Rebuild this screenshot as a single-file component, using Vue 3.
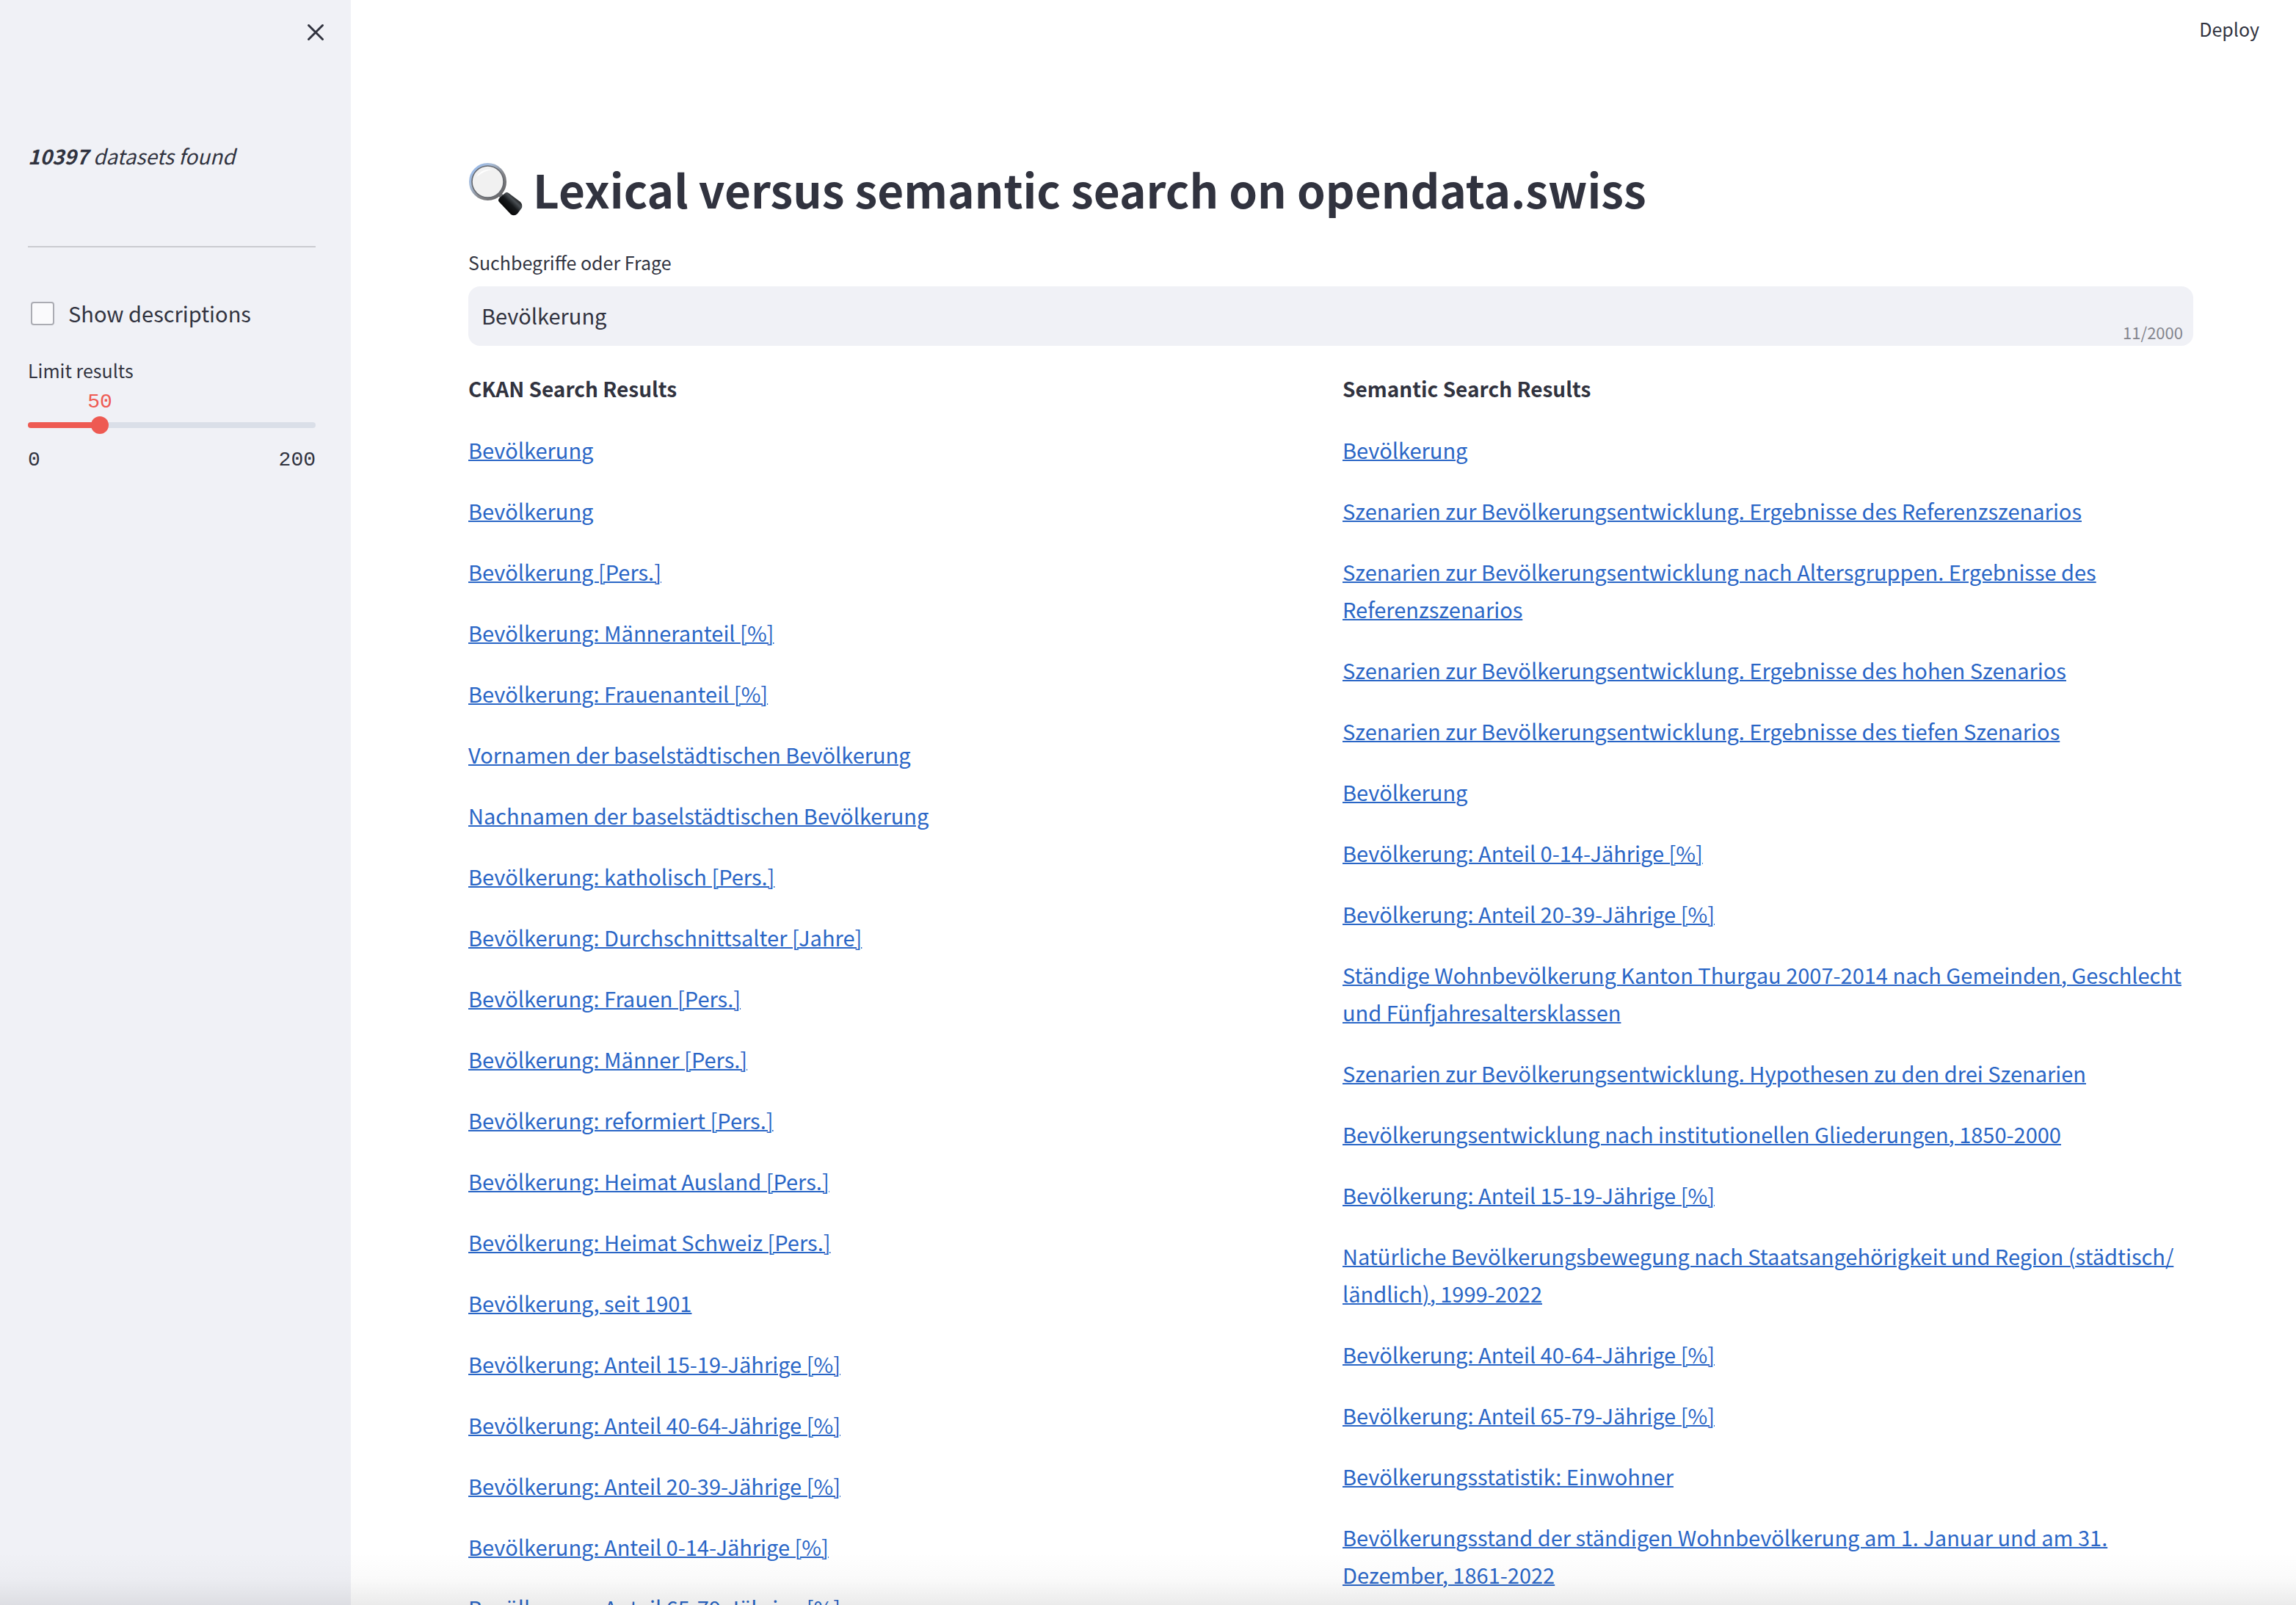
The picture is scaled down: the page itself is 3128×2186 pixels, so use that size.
<script setup>
import { ref, computed } from 'vue'

const query = ref('Bevölkerung')
const showDescriptions = ref(false)
const limit = ref(50)
const maxLimit = 200
const filled = computed(() => (limit.value / maxLimit) * 100 + '%')

const ckanResults = [
  'Bevölkerung',
  'Bevölkerung',
  'Bevölkerung [Pers.]',
  'Bevölkerung: Männeranteil [%]',
  'Bevölkerung: Frauenanteil [%]',
  'Vornamen der baselstädtischen Bevölkerung',
  'Nachnamen der baselstädtischen Bevölkerung',
  'Bevölkerung: katholisch [Pers.]',
  'Bevölkerung: Durchschnittsalter [Jahre]',
  'Bevölkerung: Frauen [Pers.]',
  'Bevölkerung: Männer [Pers.]',
  'Bevölkerung: reformiert [Pers.]',
  'Bevölkerung: Heimat Ausland [Pers.]',
  'Bevölkerung: Heimat Schweiz [Pers.]',
  'Bevölkerung, seit 1901',
  'Bevölkerung: Anteil 15-19-Jährige [%]',
  'Bevölkerung: Anteil 40-64-Jährige [%]',
  'Bevölkerung: Anteil 20-39-Jährige [%]',
  'Bevölkerung: Anteil 0-14-Jährige [%]',
  'Bevölkerung: Anteil 65-79-Jährige [%]',
]

const semanticResults = [
  'Bevölkerung',
  'Szenarien zur Bevölkerungsentwicklung. Ergebnisse des Referenzszenarios',
  'Szenarien zur Bevölkerungsentwicklung nach Altersgruppen. Ergebnisse des Referenzszenarios',
  'Szenarien zur Bevölkerungsentwicklung. Ergebnisse des hohen Szenarios',
  'Szenarien zur Bevölkerungsentwicklung. Ergebnisse des tiefen Szenarios',
  'Bevölkerung',
  'Bevölkerung: Anteil 0-14-Jährige [%]',
  'Bevölkerung: Anteil 20-39-Jährige [%]',
  'Ständige Wohnbevölkerung Kanton Thurgau 2007-2014 nach Gemeinden, Geschlecht und Fünfjahresaltersklassen',
  'Szenarien zur Bevölkerungsentwicklung. Hypothesen zu den drei Szenarien',
  'Bevölkerungsentwicklung nach institutionellen Gliederungen, 1850-2000',
  'Bevölkerung: Anteil 15-19-Jährige [%]',
  'Natürliche Bevölkerungsbewegung nach Staatsangehörigkeit und Region (städtisch/\u200bländlich), 1999-2022',
  'Bevölkerung: Anteil 40-64-Jährige [%]',
  'Bevölkerung: Anteil 65-79-Jährige [%]',
  'Bevölkerungsstatistik: Einwohner',
  'Bevölkerungsstand der ständigen Wohnbevölkerung am 1. Januar und am 31. Dezember, 1861-2022',
]
</script>

<template>
  <div class="app">
    <aside class="sidebar">
      <button class="close" type="button" aria-label="Close sidebar">
        <svg viewBox="0 0 24 24" width="24" height="24" aria-hidden="true">
          <path d="M2.5 2.5 21.5 21.5M21.5 2.5 2.5 21.5" stroke="#31333f" stroke-width="3" stroke-linecap="round" />
        </svg>
      </button>
      <p class="found"><strong>10397</strong> datasets found</p>
      <hr class="rule" />
      <label class="check">
        <input v-model="showDescriptions" type="checkbox" />
        <span>Show descriptions</span>
      </label>
      <label class="small-label" for="limit">Limit results</label>
      <div class="slider">
        <div class="value-row">
          <output class="value" for="limit" :style="{ left: filled }">{{ limit }}</output>
        </div>
        <div class="rail">
          <div class="track"><div class="fill" :style="{ width: filled }"></div></div>
          <input id="limit" v-model="limit" type="range" min="0" :max="maxLimit" />
        </div>
        <div class="ends"><span>0</span><span>{{ maxLimit }}</span></div>
      </div>
    </aside>

    <main class="main">
      <header class="toolbar">
        <button class="deploy" type="button">Deploy</button>
      </header>
      <div class="content">
        <h1 class="title">
          <svg class="lens" viewBox="0 0 74 74" width="74" height="74" aria-hidden="true">
            <defs>
              <linearGradient id="rim" x1="0" y1="0" x2="1" y2="1">
                <stop offset="0" stop-color="#8fb6ee" />
                <stop offset="0.3" stop-color="#a9bdd8" />
                <stop offset="0.6" stop-color="#85868a" />
                <stop offset="1" stop-color="#5a5a5c" />
              </linearGradient>
              <linearGradient id="grip" x1="0" y1="1" x2="1" y2="0">
                <stop offset="0" stop-color="#3a3a3a" />
                <stop offset="0.25" stop-color="#050505" />
                <stop offset="0.5" stop-color="#15181b" />
                <stop offset="0.65" stop-color="#4a4f54" />
                <stop offset="0.8" stop-color="#111" />
              </linearGradient>
            </defs>
            <path d="M43 45 48 50" stroke="#77787c" stroke-width="6" />
            <path d="M42 50 50 43Q52 41 55 43L71 55Q74 58 73 63L67 71Q63 75 58 72L42 55Q40 53 42 50Z" fill="url(#grip)" />
            <circle cx="26.5" cy="27.5" r="23.5" fill="#f1f1f1" stroke="url(#rim)" stroke-width="4" />
            <circle cx="26.5" cy="27.5" r="21.5" fill="none" stroke="#66696f" stroke-width="1.6" />
            <path d="M11 21Q18 9 33 11Q22 12 11 21Z" fill="#fff" />
          </svg>
          <span>Lexical versus semantic search on opendata.swiss</span>
        </h1>
        <label class="small-label" for="query">Suchbegriffe oder Frage</label>
        <div class="field">
          <textarea id="query" v-model="query" rows="1" maxlength="2000" spellcheck="false"></textarea>
          <span class="count">11/2000</span>
        </div>
        <div class="columns">
          <section class="column">
            <h2>CKAN Search Results</h2>
            <p v-for="(name, i) in ckanResults" :key="i"><a href="#">{{ name }}</a></p>
          </section>
          <section class="column">
            <h2>Semantic Search Results</h2>
            <p v-for="(name, i) in semanticResults" :key="i"><a href="#">{{ name }}</a></p>
          </section>
        </div>
      </div>
    </main>
    <div class="edge-shadow"></div>
  </div>
</template>

<style>
body {
  margin: 0;
}
</style>

<style scoped>
.app {
  display: flex;
  height: 100vh;
  overflow: hidden;
  position: relative;
  background: #fff;
  color: #31333f;
  font-family: "Noto Sans CJK SC", "Noto Sans", sans-serif;
  font-size: 29px;
  line-height: 51px;
}
.app *,
.app *::before {
  box-sizing: border-box;
}
p,
h1,
h2 {
  margin: 0;
}
button {
  border: 0;
  padding: 0;
  background: none;
  color: inherit;
  font: inherit;
  cursor: pointer;
}
.sidebar {
  flex: 0 0 478px;
  display: flex;
  flex-direction: column;
  padding: 32px 48px 0 38px;
  background: #f0f1f6;
}
.close {
  align-self: flex-end;
  width: 24px;
  height: 24px;
  margin-right: -12px;
}
.close svg {
  display: block;
}
.found {
  margin-top: 131px;
  font-size: 28px;
  font-style: italic;
}
.rule {
  width: 100%;
  height: 2px;
  margin: 97px 0 64px;
  border: 0;
  background: #cacbd0;
}
.check {
  display: flex;
  gap: 19px;
  padding-left: 4px;
}
.check input {
  appearance: none;
  width: 32px;
  height: 32px;
  margin: 10px 0 0;
  border: 2px solid #abacb3;
  border-radius: 4px;
  background: #fafafc;
}
.small-label {
  display: block;
  font-size: 25px;
  line-height: 40px;
}
.sidebar .small-label {
  margin-top: 32px;
}
.slider {
  display: flex;
  flex-direction: column;
  margin-top: 8px;
  font-family: "Liberation Mono", monospace;
  font-size: 28px;
  line-height: 32px;
}
.value-row {
  position: relative;
  height: 32px;
}
.value {
  position: absolute;
  top: 0;
  transform: translateX(-50%);
  color: #ee5a52;
}
.rail {
  display: grid;
  align-items: center;
  height: 24px;
  margin-top: 3px;
}
.rail > * {
  grid-area: 1 / 1;
}
.track {
  height: 8px;
  border-radius: 4px;
  background: #dadfe8;
  overflow: hidden;
}
.fill {
  height: 8px;
  background: #ee5a52;
}
.rail input {
  appearance: none;
  height: 24px;
  margin: 0 -12px;
  background: transparent;
}
.rail input::-webkit-slider-thumb {
  appearance: none;
  width: 24px;
  height: 24px;
  border-radius: 12px;
  background: #ee5a52;
}
.ends {
  display: flex;
  justify-content: space-between;
  margin-top: 20px;
}
.main {
  flex: 1;
  min-width: 0;
  overflow: auto;
  scrollbar-width: none;
}
.toolbar {
  display: flex;
  justify-content: flex-end;
  padding: 19px 50px 0 0;
}
.deploy {
  font-size: 25px;
  line-height: 40px;
}
.content {
  padding: 152px 140px 0 160px;
}
.title {
  display: flex;
  align-items: center;
  gap: 14px;
  font-size: 62px;
  font-weight: 700;
  line-height: 92px;
}
.title + .small-label {
  margin-top: 34px;
}
.field {
  position: relative;
  margin-top: 13px;
}
.field textarea {
  display: block;
  width: 100%;
  height: 81px;
  padding: 14px 18px;
  border: 0;
  border-radius: 16px;
  outline: 0;
  resize: none;
  overflow: hidden;
  background: #f0f1f6;
  color: inherit;
  font: inherit;
}
.count {
  position: absolute;
  right: 14px;
  bottom: 3px;
  color: #83848c;
  font-size: 22px;
  line-height: 32px;
}
.columns {
  display: grid;
  grid-template-columns: 1fr 1fr;
  gap: 32px;
  margin-top: 33px;
}
.column {
  display: flex;
  flex-direction: column;
  gap: 32px;
  min-width: 0;
}
h2 {
  font-size: 28px;
  font-weight: 700;
  line-height: 51px;
}
a {
  color: #2a66c6;
  text-decoration-thickness: 2px;
}
.edge-shadow {
  position: absolute;
  left: 0;
  right: 0;
  bottom: 0;
  height: 72px;
  background: linear-gradient(rgba(0, 0, 0, 0), rgba(0, 0, 0, 0.02) 50%, rgba(0, 0, 0, 0.08));
  pointer-events: none;
}
</style>
